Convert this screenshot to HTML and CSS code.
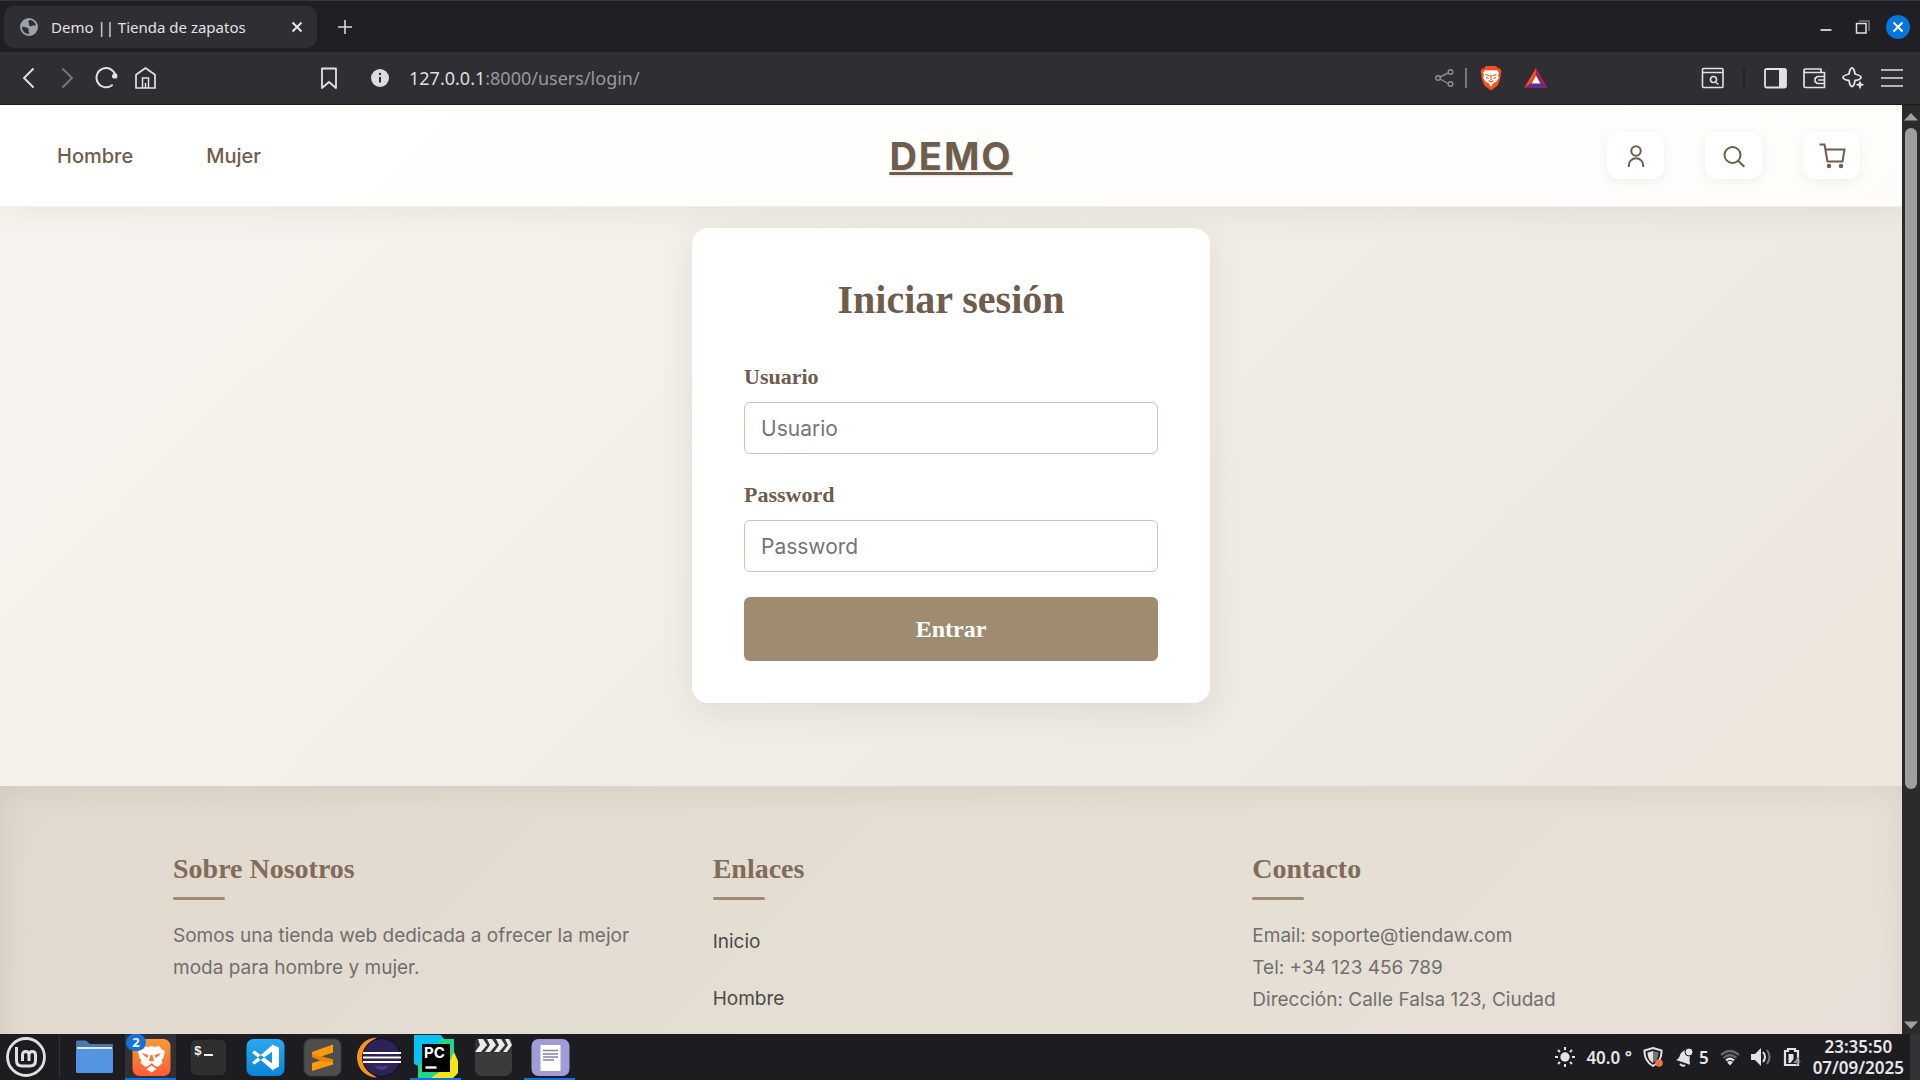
FILE: index.html
```html
<!DOCTYPE html>
<html lang="es">
<head>
<meta charset="utf-8">
<title>Demo || Tienda de zapatos</title>
<link rel="stylesheet" href="styles.css">
</head>
<body>
<div class="desktop">

  <div class="tabstrip">
    <div class="tab">
      <svg class="tab-favicon" viewBox="0 0 18 18"><circle cx="9" cy="9" r="9" fill="#9aa3ab"/><path d="M2 9c2-.8 3.500.2 5 .8 1.800.6 2 1.600 1.600 2.800-.3 1 .8 1.300.4 3.200C5 16 2 13 2 9zM9.500 2c3 0 5.500 2 6.300 5-1.300 1.200-2.300.2-3.300.8-1.200.7-2.500.6-3.300-.2-.9-1 .2-1.600-.4-2.400C8.300 4.400 8.300 2.600 9.500 2z" fill="#2f2e33"/></svg>
      <span class="tab-title">Demo || Tienda de zapatos</span>
      <button class="bare" aria-label="Cerrar pestaña"><svg class="i12" viewBox="0 0 12 12"><path d="M1.500 1.500l9 9M10.500 1.500l-9 9" stroke="#e6e6e8" stroke-width="2" fill="none"/></svg></button>
    </div>
    <button class="bare new-tab" aria-label="Nueva pestaña"><svg class="i14" viewBox="0 0 14 14"><path d="M7 0v14M0 7h14" stroke="#d8d8da" stroke-width="1.600"/></svg></button>
    <div class="window-buttons">
      <button class="bare" aria-label="Minimizar"><svg class="i24" viewBox="0 0 24 24"><path d="M6.500 15h11" stroke="#d8d8da" stroke-width="1.800"/></svg></button>
      <button class="bare" aria-label="Restaurar"><svg class="i24" viewBox="0 0 24 24"><path d="M9 6h10v10" stroke="#77777b" stroke-width="1.500" fill="none"/><path d="M6.500 8.500h9.500v9.500H6.500z" stroke="#e0e0e2" stroke-width="1.500" fill="none"/></svg></button>
      <button class="bare" aria-label="Cerrar"><svg class="i24" viewBox="0 0 24 24"><circle cx="12" cy="12" r="12" fill="#0675dc"/><path d="M7.500 7.500l9 9M16.500 7.500l-9 9" stroke="#fff" stroke-width="2"/></svg></button>
    </div>
  </div>

  <div class="toolbar">
    <div class="history">
      <button class="bare" aria-label="Atrás"><svg class="i24" viewBox="0 0 24 24"><path d="M16 3l-9 9 9 9" stroke="#e2e2e4" stroke-width="1.900" fill="none" stroke-linecap="round"/></svg></button>
      <button class="bare" aria-label="Adelante"><svg class="i24" viewBox="0 0 24 24"><path d="M7 3l9 9-9 9" stroke="#77777c" stroke-width="1.900" fill="none" stroke-linecap="round"/></svg></button>
      <button class="bare" aria-label="Recargar"><svg class="i24" viewBox="0 0 24 24"><path d="M20.500 10A9.600 9.600 0 1 0 17 19.200" stroke="#e2e2e4" stroke-width="1.900" fill="none" stroke-linecap="round"/><path d="M17 10.500q0-2 2.500-4l2.500 1.500q1 3-.5 4.500h-3q-1.500-.5-1.500-2z" fill="#e2e2e4"/></svg></button>
      <button class="bare" aria-label="Inicio"><svg class="i24" viewBox="0 0 24 24"><path d="M2 8.800L11.500 2 21 8.800V22H2z" stroke="#e2e2e4" stroke-width="1.700" fill="none" stroke-linejoin="round"/><path d="M8.500 22v-10h6v10M11.500 17v5" stroke="#e2e2e4" stroke-width="1.500" fill="none"/></svg></button>
    </div>
    <div class="address">
      <button class="bare" aria-label="Añadir marcador"><svg class="i24" viewBox="0 0 24 24"><path d="M5 2.500h14V22l-7-6-7 6z" stroke="#e2e2e4" stroke-width="1.800" fill="none" stroke-linejoin="round"/></svg></button>
      <svg class="i24 info" viewBox="0 0 24 24"><circle cx="12" cy="12" r="9" fill="#dcdcde"/><path d="M12 11v5.500" stroke="#2f2e33" stroke-width="2"/><circle cx="12" cy="8" r="1.200" fill="#2f2e33"/></svg>
      <span class="url">127.0.0.1<span class="url-path">:8000/users/login/</span></span>
      <div class="address-actions">
        <button class="bare" aria-label="Compartir"><svg class="i24" viewBox="0 0 24 24"><path d="M7 11l8-4M7 13l8 4.500" stroke="#8e8e92" stroke-width="1.400"/><g fill="none" stroke="#8e8e92" stroke-width="1.400"><circle cx="5" cy="12" r="2.300"/><circle cx="17.500" cy="6" r="2.300"/><circle cx="17.500" cy="18" r="2.300"/></g></svg></button>
        <span class="rule light"></span>
        <button class="bare" aria-label="Brave Shields"><svg class="i24" viewBox="0 0 24 24"><path d="M7 0h10l2 2.500h2l1.500 3-1 3 .3 1c-1 4.500-1.800 8-3.800 10.500L12 24.500 6 20C4 17.500 3.200 14 2.200 9.500l.3-1-1-3L3 2.500h2z" fill="#fb4f1f"/><path d="M12 4l3 .5 3-.5 2 3-1 2.500 1 2-2.500 4L14 17.500 12 21l-2-3.500-3.500-2L4 11.500l1-2L4 7l2-3 3 .5z" fill="#fff"/><path d="M6.500 8.500l4 1.200M17.500 8.500l-4 1.200M12 9v5M9.500 14.500L12 16l2.500-1.500M7 11.500l2.500 1M17 11.500l-2.500 1" stroke="#fb4f1f" stroke-width="1.200" fill="none"/></svg></button>
        <button class="bare" aria-label="Brave Rewards"><svg class="i24" viewBox="0 0 24 24"><path d="M12 2v7L7 17.500 0 22z" fill="#ff4724"/><path d="M12 2l12 20-7-4.500L12 9z" fill="#9e1f63"/><path d="M0 22l7-4.500h10l7 4.500z" fill="#662d91"/><path d="M12 9.500l4.500 8h-9z" fill="#fff"/></svg></button>
      </div>
    </div>
    <div class="tools">
      <button class="bare" aria-label="Buscar en pestañas"><svg class="i24" viewBox="0 0 24 24"><g fill="none" stroke="#e2e2e4" stroke-width="1.600"><rect x="1.500" y="2.500" width="20.500" height="19" rx="1"/><path d="M1.500 6.500h20.500M15 16.500l2.500 2"/><circle cx="12.500" cy="13.500" r="3"/></g></svg></button>
      <span class="rule dark"></span>
      <button class="bare" aria-label="Panel lateral"><svg class="i24" viewBox="0 0 24 24"><rect x="2" y="3" width="21" height="18.500" rx="1.500" fill="none" stroke="#e2e2e4" stroke-width="1.800"/><path d="M16 3h7v18.500h-7z" fill="#e2e2e4"/></svg></button>
      <button class="bare" aria-label="Cartera"><svg class="i24" viewBox="0 0 24 24"><g fill="none" stroke="#e2e2e4" stroke-width="1.700" stroke-linejoin="round"><path d="M2 3.500V20q0 1.500 1.500 1.500h19v-15H3.500Q2 6.500 2 4.500 2 3 3.500 3h15.500v3.500M22.500 10.500h-7l-2.500 2v3l2.500 2h7M16 14h6"/></g></svg></button>
      <button class="bare" aria-label="Asistente"><svg class="i24" viewBox="0 0 24 24"><path d="M11 2q2 0 3 6 6 1.500 6 3.500t-6 3q-1 6-3 6t-3-6q-6-1-6-3t6-3.500q1-6 3-6z" fill="none" stroke="#e2e2e4" stroke-width="1.800"/><path d="M19 14.500l1.300 2.900 3.200 1.300-3.200 1.300L19 23.500l-1.300-3.500-3.200-1.300 3.200-1.300z" fill="#e2e2e4"/></svg></button>
      <button class="bare" aria-label="Menú"><svg class="i24" viewBox="0 0 24 24"><path d="M1 4h22M1 12h22M1 20h22" stroke="#e2e2e4" stroke-width="1.700"/></svg></button>
    </div>
  </div>

  <div class="viewport">
    <div class="page">
      <header class="site-header">
        <nav class="site-nav">
          <a href="#">Hombre</a>
          <a href="#">Mujer</a>
        </nav>
        <a class="logo" href="#">DEMO</a>
        <div class="site-actions">
          <a class="icon-button" href="#" aria-label="Cuenta"><svg class="i28" viewBox="0 0 28 28"><g fill="none" stroke="#6f5d4c" stroke-width="2"><circle cx="14" cy="9" r="4.700"/><path d="M6.800 25v-1.500a7.200 7.200 0 0 1 14.400 0V25"/></g></svg></a>
          <a class="icon-button" href="#" aria-label="Buscar"><svg class="i28" viewBox="0 0 28 28"><g fill="none" stroke="#6f5d4c" stroke-width="2"><circle cx="12.500" cy="13" r="8"/><path d="M18.300 18.800l6 6"/></g></svg></a>
          <a class="icon-button" href="#" aria-label="Carrito"><svg class="i28" viewBox="0 0 28 28"><path d="M1.500 2.500h5l3 17h15l2-12H7.500" fill="none" stroke="#6f5d4c" stroke-width="2"/><circle cx="11" cy="24" r="2.200" fill="#6f5d4c"/><circle cx="23" cy="24" r="2.200" fill="#6f5d4c"/></svg></a>
        </div>
      </header>

      <main class="content">
        <form class="login-card">
          <h1>Iniciar sesión</h1>
          <div class="field">
            <label for="user">Usuario</label>
            <input id="user" type="text" placeholder="Usuario">
          </div>
          <div class="field">
            <label for="pass">Password</label>
            <input id="pass" type="password" placeholder="Password">
          </div>
          <button class="submit" type="submit">Entrar</button>
        </form>
      </main>

      <footer class="site-footer">
        <section>
          <h2>Sobre Nosotros</h2>
          <p>Somos una tienda web dedicada a ofrecer la mejor moda para hombre y mujer.</p>
        </section>
        <section>
          <h2>Enlaces</h2>
          <ul>
            <li><a href="#">Inicio</a></li>
            <li><a href="#">Hombre</a></li>
          </ul>
        </section>
        <section>
          <h2>Contacto</h2>
          <p>Email: soporte@tiendaw.com</p>
          <p>Tel: +34 123 456 789</p>
          <p>Dirección: Calle Falsa 123, Ciudad</p>
        </section>
      </footer>
    </div>
    <div class="scrollbar">
      <svg class="arrow" viewBox="0 0 14 8"><path d="M7 0l7 7.500H0z" fill="#a0a0a0"/></svg>
      <div class="thumb"></div>
      <div class="track"></div>
      <svg class="arrow" viewBox="0 0 14 8"><path d="M0 .5h14L7 8z" fill="#a0a0a0"/></svg>
    </div>
  </div>

  <div class="taskbar">
    <button class="bare start" aria-label="Menú del sistema"><svg class="i40" viewBox="0 0 40 40"><g fill="none" stroke="#e0e0e0"><circle cx="20" cy="20" r="18.500" stroke-width="2.800"/><path d="M10.500 10v13.500q0 5.500 5.500 5.500h8q5.500 0 5.500-5.500V18q0-3.500-3.200-3.500T23 18v6M23 18q0-3.500-3.200-3.500T16.500 18v6" stroke-width="3"/></g></svg></button>
    <span class="task-rule"></span>
    <div class="apps">
      <button class="bare app" aria-label="Archivos"><svg class="i46" viewBox="0 0 46 46"><path d="M5 8q0-1.500 1.500-1.500H15l4 3.500h22q1 0 1 1v10H5z" fill="#4877b1"/><path d="M6 13h35v6H6z" fill="#e6e6e6"/><path d="M5 15h37v22.500q0 1.500-1.500 1.500h-34Q5 39 5 37.500z" fill="#5294e2"/></svg></button>
      <button class="bare app active open" aria-label="Brave"><svg class="i46" viewBox="0 0 46 46"><defs><linearGradient id="brave" x2="0" y2="1"><stop stop-color="#f99a34"/><stop offset="1" stop-color="#fd5c36"/></linearGradient></defs><rect x="4.500" y="5" width="38" height="37" rx="7" fill="url(#brave)"/><path d="M16 12l4.500 1 3-1 3 1 4.500-1 3 3.500 3 1.500-1.500 7-2 2 1 3-5 4-2.500-1-3.500-3-3.500 3-2.500 1-5-4 1-3-2-2L10 17l3-1.500z" fill="#fff"/><path d="M23.500 31.500l5 3.500-5 3.500-5-3.500z" fill="#fff"/><path d="M14 19l6.500 2-1 3-3-2zM33 19l-6.500 2 1 3 3-2zM22.500 21h2l1.500 6h-5z" fill="#fc7436"/></svg><span class="badge">2</span></button>
      <button class="bare app" aria-label="Terminal"><svg class="i46" viewBox="0 0 46 46"><rect x="5" y="5" width="37" height="37" rx="7" fill="#2f2f2f" stroke="#161616"/><path d="M19 21h9" stroke="#eee" stroke-width="2"/><text x="9" y="21" class="prompt">$</text></svg></button>
      <button class="bare app" aria-label="Visual Studio Code"><svg class="i46" viewBox="0 0 46 46"><defs><linearGradient id="code" x2="0" y2="1"><stop stop-color="#2aaaf0"/><stop offset="1" stop-color="#0a84d8"/></linearGradient></defs><rect x="4.500" y="5" width="38" height="37" rx="7" fill="url(#code)"/><path d="M10 18.500l2.500-2L31 30v6.500zM10 28.500l2.500 2L31 17v-6.500z" fill="#fff"/><path d="M30 10.500l7 3v19L30 36.500z" fill="#fff"/></svg></button>
      <button class="bare app" aria-label="Sublime Text"><svg class="i46" viewBox="0 0 46 46"><rect x="5" y="5" width="37" height="37" rx="7" fill="#4e4e4e" stroke="#3d3d3d"/><path d="M13 18l21-7.500v8l-12 4 12 3v5L13 37v-8l12-3.500-12-3z" fill="#ff9b0a"/><path d="M13 20l21 5.500v3L22 27l-9-4z" fill="#e98400"/></svg></button>
      <button class="bare app" aria-label="Eclipse"><svg class="i46" viewBox="0 0 46 46"><path d="M21 3.500A20 20 0 0 0 21 43.500 23 23 0 0 1 21 3.500z" fill="#f7941e"/><circle cx="25.500" cy="23.500" r="19" fill="#2c2255" stroke="#100c20"/><path d="M7 19h38M7 23.500h38M7 28h38" stroke="#fff" stroke-width="2"/><path d="M18 32q7.500 8 15 0z" fill="#483889"/></svg></button>
      <button class="bare app open" aria-label="PyCharm"><svg class="i46" viewBox="0 0 46 46"><path d="M1 1h27l6 8v21L12 35 1 30z" fill="#07c3f2"/><path d="M28 5h13v16L20 44H5V32z" fill="#21d789"/><path d="M41 18l4 9v12l-5 5H18l16-12z" fill="#f0e817"/><path d="M9 10h28v28H9z" fill="#000"/><path d="M12.500 33.500h11" stroke="#fff" stroke-width="2.400"/><text x="11" y="24" class="pc">PC</text></svg></button>
      <button class="bare app" aria-label="Editor de vídeo"><svg class="i46" viewBox="0 0 46 46"><rect x="5" y="10" width="37" height="32" rx="7" fill="#3b3b3b"/><path d="M7 5h33q2 0 2 3v11H5V8q0-3 2-3z" fill="#333"/><path d="M8 5h5l4 6-6 7H5l5-7zM17 5h5l4 6-6 7h-5l5-7zM26 5h5l4 6-6 7h-5l5-7zM35 5h4l3 6-5 7h-4l5-7z" fill="#ececec"/></svg></button>
      <button class="bare app open" aria-label="Documentos"><svg class="i46" viewBox="0 0 46 46"><rect x="4.500" y="5" width="38" height="37" rx="7" fill="#a19cd8"/><path d="M13.500 11h20v26h-20z" fill="#fff"/><path d="M16 16.500h15M16 20h15M16 23h15M16 26h11" stroke="#8480b0" stroke-width="1.300"/></svg></button>
    </div>
    <div class="tray">
      <svg class="i20" viewBox="0 0 20 20"><circle cx="10" cy="10" r="4.700" fill="#e3e3e3"/><path d="M10 0v3M10 17v3M0 10h3M17 10h3M3 3l2 2M15 15l2 2M17 3l-2 2M5 15l-2 2" stroke="#e3e3e3" stroke-width="2"/></svg>
      <span class="temp">40.0 °</span>
      <svg class="i20" viewBox="0 0 20 20"><path d="M10 1l8.500 2.500Q19 14 10 19 1 14 1.500 3.500z" fill="none" stroke="#e3e3e3" stroke-width="2"/><path d="M10 4v12Q4.500 13 4.500 5.500z" fill="#e3e3e3"/><path d="M10 4v12q5.500-3 5.500-10.500z" fill="#777"/><circle cx="16" cy="16" r="3.800" fill="#f07440"/></svg>
      <span class="alerts"><svg class="i20" viewBox="0 0 20 20"><path d="M2 13q3-1 4-5 1.500-4 6-5 4 2 4 6-1 4 0 8-1 1-2 0z" fill="#e3e3e3"/><circle cx="15" cy="5" r="4" fill="#e3e3e3" stroke="#1d1c21"/><path d="M6 17q3 3 5 1" stroke="#e3e3e3" stroke-width="2" fill="none"/></svg>5</span>
      <svg class="i20" viewBox="0 0 20 20"><g fill="none" stroke-width="2.200"><path d="M1 8q9-8 18 0M3.500 11q6.500-6 13 0" stroke="#68686c"/><path d="M6 13.500q4-3.500 8 0" stroke="#e3e3e3"/></g><path d="M7 15q3-2 6 0l-3 3.500z" fill="#e3e3e3"/></svg>
      <svg class="i20" viewBox="0 0 20 20"><path d="M0 7h4l6-6v18l-6-6H0z" fill="#e3e3e3"/><path d="M12 5q4 5 0 10" stroke="#e3e3e3" stroke-width="2" fill="none"/><path d="M16 3q5 7 0 14" stroke="#77777b" stroke-width="2" fill="none"/></svg>
      <svg class="i20" viewBox="0 0 20 20"><path d="M3 4h3V2h7v2h3v14H3z" fill="none" stroke="#e3e3e3" stroke-width="2.200"/><path d="M6.500 7h5v5l-3 4h-2z" fill="#e3e3e3"/><path d="M17 9l-6 7h4l-2 4 6-6h-3z" fill="#8e8e92"/></svg>
      <div class="clock"><span>23:35:50</span><span>07/09/2025</span></div>
    </div>
    <div class="show-desktop"></div>
  </div>
</div>
</body>
</html>
```
FILE: styles.css
```css
* { box-sizing: border-box; }

body {
  margin: 0;
  font-family: "Inter", sans-serif;
}

h1, h2, p, ul { margin: 0; padding: 0; }
ul { list-style: none; }
svg { display: block; flex: none; }

.bare {
  display: block;
  flex: none;
  padding: 0;
  border: 0;
  background: none;
}

.i12 { width: 12px; height: 12px; }
.i14 { width: 14px; height: 14px; }
.i20 { width: 20px; height: 20px; }
.i24 { width: 24px; height: 24px; overflow: visible; }
.i28 { width: 28px; height: 28px; }
.i40 { width: 40px; height: 40px; }
.i46 { width: 46px; height: 46px; }

.desktop {
  display: flex;
  flex-direction: column;
  height: 100vh;
  overflow: hidden;
}

/* Browser window */

.tabstrip {
  display: flex;
  flex: none;
  align-items: center;
  height: 52px;
  padding: 0 10px 0 4px;
  border-top: 1px solid #363636;
  background: #202024;
  color: #e2e2e4;
  font: 15px "Noto Sans", sans-serif;
}

.tab {
  display: flex;
  align-items: center;
  width: 313px;
  height: 42px;
  padding: 0 14px 0 16px;
  border-radius: 10px;
  background: #2f2e33;
}

.tab-favicon { width: 18px; height: 18px; }
.tab-title { flex: 1; margin-left: 13px; white-space: nowrap; }
.new-tab { margin-left: 21px; }

.window-buttons {
  display: flex;
  gap: 12px;
  margin-left: auto;
}

.toolbar {
  display: flex;
  flex: none;
  align-items: center;
  height: 53px;
  padding: 0 16px 0 17px;
  border-bottom: 1px solid #1c1c1f;
  background: #2f2e33;
}

.history { display: flex; gap: 15px; }

.address {
  display: flex;
  flex: 1;
  align-items: center;
  margin: 0 153px 0 159px;
}

.info { margin: 0 17px 0 27px; }
.url { color: #dedee0; font: 18px "Noto Sans", sans-serif; }
.url-path { color: #98989c; }

.address-actions {
  display: flex;
  align-items: center;
  margin-left: auto;
}

.address-actions .bare + .bare { margin-left: 21px; }
.rule { flex: none; width: 2px; height: 20px; }
.rule.light { margin: 0 12px 0 8px; background: #77777b; }
.rule.dark { margin: 0 3px; background: #232327; }

.tools {
  display: flex;
  align-items: center;
  gap: 15px;
}

/* Shop page */

.viewport {
  display: flex;
  flex: 1;
  min-height: 0;
}

.page {
  flex: 1;
  overflow: hidden;
  background: linear-gradient(135deg, #f8f5f0 0%, #ede8e1 75%, #efe5da 95%);
}

.site-header {
  position: relative;
  display: grid;
  grid-template-columns: 1fr auto 1fr;
  align-items: center;
  height: 102px;
  padding: 0 42px;
  border-bottom: 1px solid #f1eee9;
  background: linear-gradient(135deg, #ffffff, #fdfcf9);
  box-shadow: 0 4px 30px rgba(60, 45, 30, .08);
}

.site-nav {
  display: flex;
  gap: 73px;
  padding-left: 15px;
}

.site-nav a {
  color: #6f5d4c;
  font-size: 20px;
  font-weight: 500;
  text-decoration: none;
}

.logo {
  color: #6f5d4c;
  font-size: 38px;
  font-weight: 700;
  letter-spacing: 2px;
  text-decoration: underline;
  text-shadow: 1px 1px 2px rgba(0, 0, 0, .12);
}

.site-actions {
  display: flex;
  justify-content: flex-end;
  gap: 41px;
}

.icon-button {
  display: grid;
  place-items: center;
  width: 57px;
  height: 47px;
  border-radius: 12px;
  background: #ffffff;
  box-shadow: 0 3px 12px rgba(0, 0, 0, .05);
}

.content {
  display: flex;
  justify-content: center;
  padding: 21px 20px 83px;
}

.login-card {
  display: flex;
  flex-direction: column;
  gap: 25px;
  width: 518px;
  padding: 42px 52px;
  border-radius: 16px;
  background: #ffffff;
  box-shadow: 0 8px 32px rgba(110, 90, 70, .12);
}

.login-card h1 {
  margin-bottom: 6px;
  color: #6f5d4c;
  font: bold 40px/60px "Liberation Serif", serif;
  text-align: center;
}

.field {
  display: flex;
  flex-direction: column;
  gap: 9px;
}

.field label {
  color: #6f5d4c;
  font: bold 22px/32px "Liberation Serif", serif;
}

.field input {
  height: 52px;
  padding: 0 16px;
  border: 1px solid #cfc2b5;
  border-radius: 6px;
  background: #ffffff;
  font: 21px "Inter", sans-serif;
}

.field input::placeholder { color: #757575; }

.submit {
  height: 64px;
  border: 0;
  border-radius: 6px;
  background: #9f8b70;
  color: #ffffff;
  font: bold 24px "Liberation Serif", serif;
}

.site-footer {
  display: grid;
  grid-template-columns: repeat(3, 1fr);
  gap: 63px;
  padding: 62px 173px 80px;
  background: linear-gradient(135deg, #e1d9cd, #e5ded2 50%, #e9e1d9);
  box-shadow: inset 0 2px 30px rgba(60, 45, 30, .09);
  color: #6f6f6f;
  font-size: 19px;
  line-height: 32px;
}

.site-footer h2 {
  margin-bottom: 20px;
  color: #806c59;
  font: bold 28px/42px "Liberation Serif", serif;
}

.site-footer h2::after {
  content: "";
  display: block;
  width: 52px;
  height: 3px;
  margin-top: 7px;
  border-radius: 2px;
  background: #9f8b70;
}

.site-footer ul {
  display: grid;
  gap: 25px;
  padding-top: 6px;
}

.site-footer li a { color: #4a4a4a; text-decoration: none; }

.scrollbar {
  display: flex;
  flex: none;
  flex-direction: column;
  align-items: center;
  gap: 7px;
  width: 18px;
  padding: 8px 0 5px;
  background: #2b2b2b;
}

.arrow { width: 14px; height: 8px; }
.thumb { flex: 662; width: 12px; border-radius: 6px; background: #9f9f9f; }
.track { flex: 218; }

/* Desktop panel */

.taskbar {
  display: flex;
  flex: none;
  align-items: center;
  height: 46px;
  padding-left: 6px;
  background: #1d1c21;
  color: #e6e6e6;
  font: 600 17px/21px "Noto Sans", sans-serif;
}

.task-rule {
  width: 1px;
  height: 42px;
  margin: 0 8px 0 13px;
  background: #343438;
}

.apps { display: flex; gap: 6px; }

.app {
  position: relative;
  display: flex;
  justify-content: center;
  width: 51px;
  height: 46px;
}

.app.active { background: #313036; }
.app.open { border-bottom: 2px solid #1472da; }

.badge {
  position: absolute;
  top: 0;
  left: 1px;
  width: 20px;
  height: 17px;
  border-radius: 9px;
  background: #1472da;
  color: #ffffff;
  font: bold 13px/17px "Noto Sans", sans-serif;
  text-align: center;
}

.prompt { fill: #eeeeee; font: bold 13px "Liberation Mono", monospace; }
.pc { fill: #ffffff; font: bold 15px "Inter", sans-serif; }

.tray {
  display: flex;
  align-items: center;
  gap: 11px;
  margin: 0 6px 0 auto;
  white-space: nowrap;
}

.alerts { display: flex; align-items: center; gap: 5px; }

.clock {
  display: flex;
  flex-direction: column;
  text-align: center;
}

.show-desktop { width: 10px; height: 46px; background: #323237; }
```
